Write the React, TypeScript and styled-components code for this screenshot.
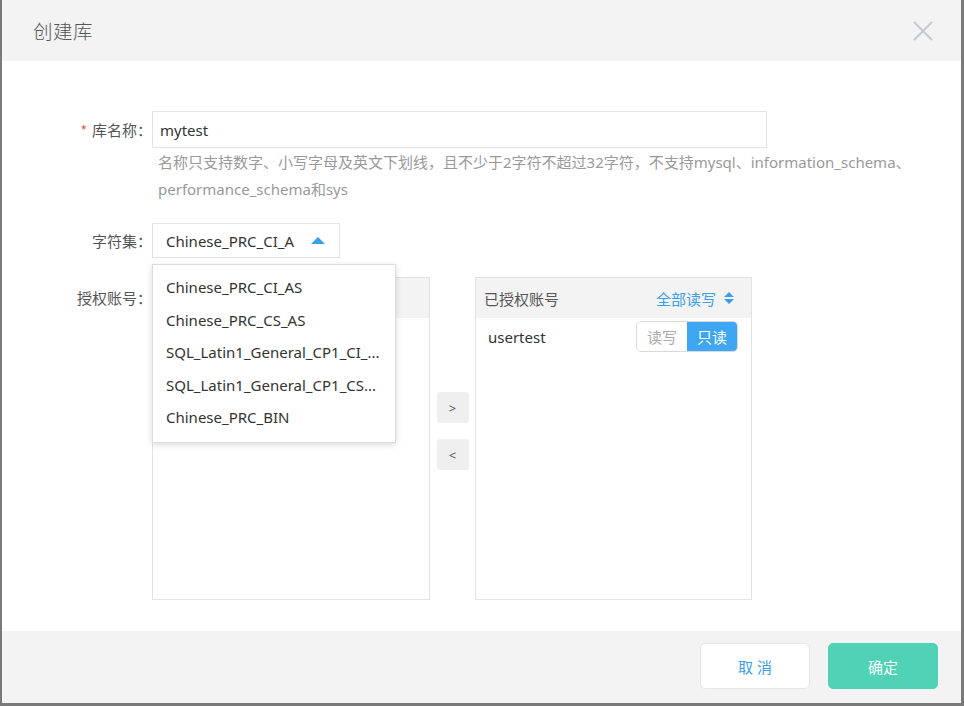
import React from "react";
import styled, { createGlobalStyle } from "styled-components";

const Global = createGlobalStyle`
  html, body { margin: 0; padding: 0; background: #ffffff; }
  body { font-family: "Noto Sans", "Noto Sans CJK SC", sans-serif; }
  * { box-sizing: border-box; }
`;

const Dialog = styled.div`
  width: 964px;
  height: 706px;
  display: flex;
  flex-direction: column;
  border-left: 2px solid #7a7a7a;
  border-right: 3px solid #7a7a7a;
  border-bottom: 3px solid #7a7a7a;
  background: #fff;
`;

const Header = styled.div`
  height: 61px;
  flex: none;
  background: #f3f3f3;
  display: flex;
  align-items: center;
  justify-content: space-between;
  padding: 0 28px 0 31px;
`;

const Title = styled.div`
  font-family: "Noto Sans CJK SC", sans-serif;
  font-size: 19.5px;
  font-weight: 300;
  color: #555;
  letter-spacing: 0.5px;
`;

const Close = styled.svg`
  width: 20px;
  height: 20px;
  display: block;
`;

const Body = styled.div`
  flex: 1;
  padding: 50px 0 0 0;
  display: flex;
  flex-direction: column;
`;

const Row = styled.div<{ $mt?: number }>`
  display: grid;
  grid-template-columns: 150px 1fr;
  margin-top: ${(p) => p.$mt ?? 0}px;
`;

const Label = styled.div<{ $h: number }>`
  height: ${(p) => p.$h}px;
  display: flex;
  align-items: center;
  justify-content: flex-end;
  font-family: "Noto Sans CJK SC", sans-serif;
  font-size: 15px;
  color: #555;
`;

const Star = styled.span`
  color: #e4545a;
  margin-right: 5px;
  font-size: 14px;
`;

const Field = styled.div`
  display: flex;
  flex-direction: column;
  position: relative;
`;

const Input = styled.div`
  width: 615px;
  height: 37px;
  border: 1px solid #e3e3e3;
  display: flex;
  align-items: center;
  padding-left: 7px;
  font-size: 15px;
  color: #333;
`;

const Hint = styled.div`
  margin-top: 1px;
  padding-left: 6px;
  font-size: 15px;
  line-height: 27px;
  color: #999;
  white-space: nowrap;
`;

const Select = styled.div`
  width: 188px;
  height: 35px;
  border: 1px solid #e3e3e3;
  display: flex;
  align-items: center;
  padding-left: 13px;
  font-size: 15px;
  color: #333;
  gap: 17px;
  white-space: nowrap;
`;

const Caret = styled.span`
  width: 0;
  height: 0;
  border-left: 7px solid transparent;
  border-right: 7px solid transparent;
  border-bottom: 7px solid #3a9ee8;
`;

const Menu = styled.div`
  position: absolute;
  left: 0;
  top: 41px;
  width: 244px;
  background: #fff;
  border: 1px solid #dcdcdc;
  box-shadow: 0 2px 6px rgba(0, 0, 0, 0.15);
  padding: 6px 0 8px;
  z-index: 5;
`;

const MenuItem = styled.div`
  height: 32.5px;
  display: flex;
  align-items: center;
  padding-left: 13px;
  font-size: 15px;
  color: #333;
  white-space: nowrap;
`;

const Transfer = styled.div`
  display: flex;
`;

const Panel = styled.div<{ $w: number }>`
  width: ${(p) => p.$w}px;
  height: 323px;
  border: 1px solid #e3e3e3;
  display: flex;
  flex-direction: column;
`;

const PanelHead = styled.div`
  height: 40px;
  flex: none;
  background: #f3f3f3;
  display: flex;
  align-items: center;
  justify-content: space-between;
  padding: 0 17px 0 8px;
  font-family: "Noto Sans CJK SC", sans-serif;
  font-size: 15px;
  color: #555;
`;

const HeadAction = styled.div`
  display: flex;
  align-items: center;
  gap: 8px;
  color: #3a9ee8;
`;

const Sort = styled.svg`
  width: 10px;
  height: 12px;
  display: block;
`;

const UserRow = styled.div`
  height: 37px;
  display: flex;
  align-items: center;
  justify-content: space-between;
  padding: 0 13px 0 12px;
  font-size: 15px;
  color: #333;
`;

const Toggle = styled.div`
  display: flex;
  height: 31px;
  border: 1px solid #d9d9d9;
  border-radius: 5px;
  overflow: hidden;
`;

const ToggleOpt = styled.div<{ $on?: boolean }>`
  width: 50px;
  display: flex;
  align-items: center;
  justify-content: center;
  font-family: "Noto Sans CJK SC", sans-serif;
  font-size: 15px;
  background: ${(p) => (p.$on ? "#3fa6f3" : "#fff")};
  color: ${(p) => (p.$on ? "#fff" : "#aaa")};
`;

const Middle = styled.div`
  width: 45px;
  display: flex;
  flex-direction: column;
  align-items: center;
  padding-top: 115px;
  gap: 16px;
`;

const MoveBtn = styled.div`
  width: 32px;
  height: 31px;
  background: #efefef;
  border-radius: 3px;
  display: flex;
  align-items: center;
  justify-content: center;
  font-size: 13px;
  color: #555;
`;

const Footer = styled.div`
  height: 72px;
  flex: none;
  background: #f3f3f3;
  display: flex;
  justify-content: flex-end;
  align-items: flex-start;
  padding: 12px 23px 0 0;
  gap: 18px;
`;

const Btn = styled.div<{ $primary?: boolean }>`
  width: 110px;
  height: 46px;
  border-radius: 5px;
  display: flex;
  align-items: center;
  justify-content: center;
  font-family: "Noto Sans CJK SC", sans-serif;
  font-size: 15px;
  letter-spacing: ${(p) => (p.$primary ? "0" : "4px")};
  text-indent: ${(p) => (p.$primary ? "0" : "4px")};
  background: ${(p) => (p.$primary ? "#4fd2b5" : "#fff")};
  color: ${(p) => (p.$primary ? "#fff" : "#3a9ee8")};
  border: 1px solid ${(p) => (p.$primary ? "#4fd2b5" : "#e6e6e6")};
`;

const options = [
  "Chinese_PRC_CI_AS",
  "Chinese_PRC_CS_AS",
  "SQL_Latin1_General_CP1_CI_...",
  "SQL_Latin1_General_CP1_CS...",
  "Chinese_PRC_BIN",
];

export default function App() {
  return (
    <>
      <Global />
      <Dialog>
        <Header>
          <Title>创建库</Title>
          <Close viewBox="0 0 20 20">
            <path d="M1 1 L19 19 M19 1 L1 19" stroke="#c3c9d2" strokeWidth="2" fill="none" />
          </Close>
        </Header>
        <Body>
          <Row>
            <Label $h={37}>
              <Star>*</Star>库名称：
            </Label>
            <Field>
              <Input>mytest</Input>
              <Hint>
                名称只支持数字、小写字母及英文下划线，且不少于2字符不超过32字符，不支持mysql、information_schema、
                <br />
                performance_schema和sys
              </Hint>
            </Field>
          </Row>
          <Row $mt={20}>
            <Label $h={35}>字符集：</Label>
            <Field>
              <Select>
                Chinese_PRC_CI_A
                <Caret />
              </Select>
              <Menu>
                {options.map((o) => (
                  <MenuItem key={o}>{o}</MenuItem>
                ))}
              </Menu>
            </Field>
          </Row>
          <Row $mt={19}>
            <Label $h={40}>授权账号：</Label>
            <Transfer>
              <Panel $w={278}>
                <PanelHead />
              </Panel>
              <Middle>
                <MoveBtn>&gt;</MoveBtn>
                <MoveBtn>&lt;</MoveBtn>
              </Middle>
              <Panel $w={277}>
                <PanelHead>
                  已授权账号
                  <HeadAction>
                    全部读写
                    <Sort viewBox="0 0 10 12">
                      <path d="M5 0 L10 5 L0 5 Z M0 7 L10 7 L5 12 Z" fill="#3a9ee8" />
                    </Sort>
                  </HeadAction>
                </PanelHead>
                <UserRow>
                  usertest
                  <Toggle>
                    <ToggleOpt>读写</ToggleOpt>
                    <ToggleOpt $on>只读</ToggleOpt>
                  </Toggle>
                </UserRow>
              </Panel>
            </Transfer>
          </Row>
        </Body>
        <Footer>
          <Btn>取消</Btn>
          <Btn $primary>确定</Btn>
        </Footer>
      </Dialog>
    </>
  );
}
